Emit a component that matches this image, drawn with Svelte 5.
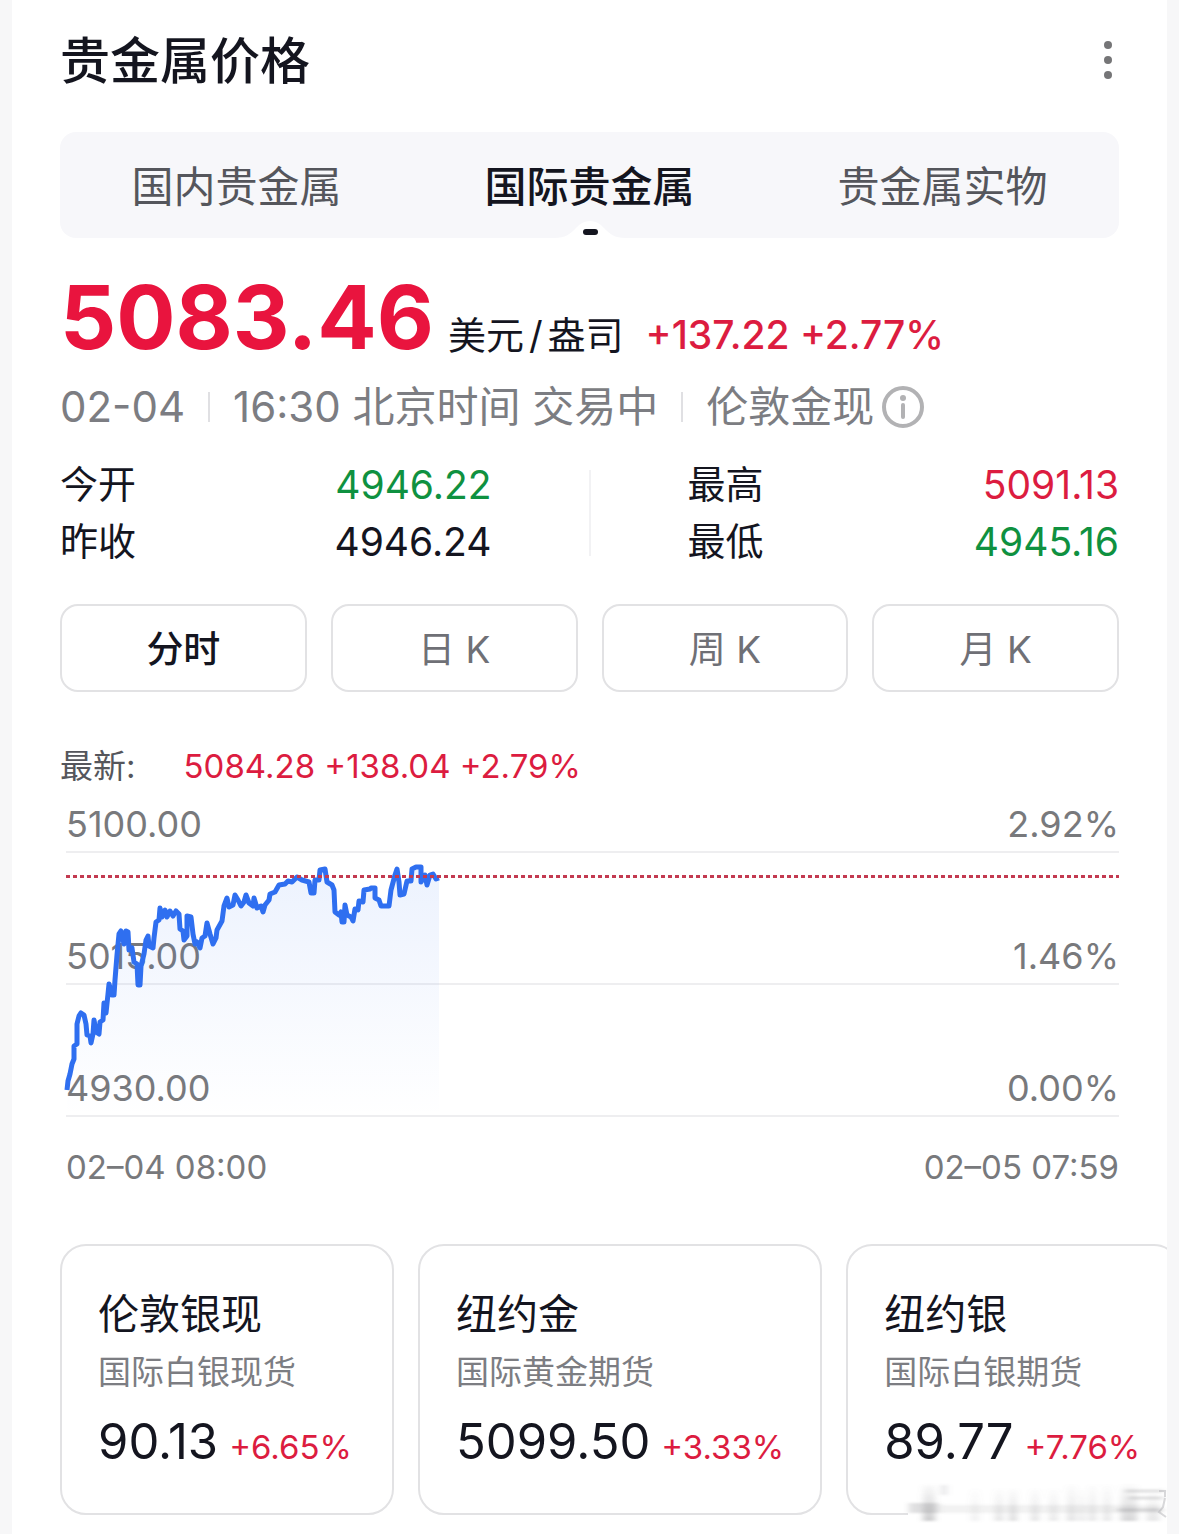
<script lang="ts">
  interface Quote {
    name: string;
    desc: string;
    price: string;
    pct: string;
  }

  const tabs = ['国内贵金属', '国际贵金属', '贵金属实物'];
  const periods = ['分时', '日 K', '周 K', '月 K'];

  const stats = [
    [
      { label: '今开', value: '4946.22', tone: 'down' },
      { label: '昨收', value: '4946.24', tone: '' },
    ],
    [
      { label: '最高', value: '5091.13', tone: 'up' },
      { label: '最低', value: '4945.16', tone: 'down' },
    ],
  ];

  const levels = [
    { price: '5100.00', pct: '2.92%' },
    { price: '5015.00', pct: '1.46%' },
    { price: '4930.00', pct: '0.00%' },
  ];

  const quotes: Quote[] = [
    { name: '伦敦银现', desc: '国际白银现货', price: '90.13', pct: '+6.65%' },
    { name: '纽约金', desc: '国际黄金期货', price: '5099.50', pct: '+3.33%' },
    { name: '纽约银', desc: '国际白银期货', price: '89.77', pct: '+7.76%' },
  ];

  // x, y in chart units: 1053 wide, 264 from top to bottom grid line
  const points: [number, number][] = [
    [1, 238], [2, 229], [4, 222], [6, 212], [8, 207], [8, 194], [11, 192], [11, 172],
    [13, 164], [15, 161], [18, 163], [20, 172], [21, 183], [24, 184], [25, 191], [27, 182],
    [28, 168], [30, 180], [33, 182], [34, 170], [37, 168], [38, 151], [40, 161], [42, 142],
    [43, 132], [46, 143], [48, 143], [49, 128], [51, 103], [53, 82], [55, 79], [58, 92],
    [60, 79], [62, 80], [63, 98], [66, 96], [68, 110], [71, 112], [72, 133], [74, 133],
    [75, 114], [78, 102], [80, 88], [82, 84], [83, 94], [87, 96], [88, 86], [90, 70],
    [93, 68], [94, 56], [96, 65], [99, 58], [101, 65], [104, 59], [107, 64], [110, 59],
    [113, 62], [114, 77], [117, 79], [118, 88], [121, 84], [121, 64], [125, 65], [127, 82],
    [129, 92], [131, 90], [134, 96], [136, 86], [139, 84], [141, 71], [144, 82], [147, 92],
    [150, 86], [151, 78], [156, 69], [158, 54], [161, 46], [163, 55], [167, 53], [169, 43],
    [172, 48], [175, 54], [178, 50], [180, 43], [183, 51], [187, 54], [188, 46], [191, 56],
    [195, 54], [197, 60], [199, 53], [203, 48], [204, 42], [209, 40], [213, 33], [219, 32],
    [222, 29], [226, 30], [231, 25], [236, 28], [243, 30], [245, 41], [248, 41], [249, 28],
    [253, 28], [254, 18], [259, 17], [261, 30], [266, 33], [268, 38], [269, 60], [273, 63],
    [275, 60], [276, 70], [278, 70], [279, 53], [281, 63], [285, 65], [287, 69], [289, 57],
    [292, 58], [293, 49], [297, 50], [298, 38], [304, 37], [305, 36], [309, 36], [309, 46],
    [313, 48], [315, 54], [323, 54], [325, 38], [329, 23], [331, 17], [333, 30], [334, 43],
    [338, 42], [341, 29], [345, 29], [346, 17], [350, 15], [355, 15], [355, 30], [359, 23],
    [361, 33], [364, 23], [367, 22], [370, 27], [373, 26],
  ];
  const line = 'M' + points.map((p) => p.join(' ')).join('L');
  const area = line + 'V264H1Z';

  // x, top, width and strength of the dark bands in the corner mark
  const bands = [
    [20, 4, 12, 0.4], [68, 8, 8, 0.12], [92, 8, 8, 0.22], [106, 8, 8, 0.28],
    [128, 8, 8, 0.22], [146, 8, 9, 0.18], [164, 4, 9, 0.22], [176, 8, 6, 0.18],
    [186, 4, 7, 0.22], [200, 4, 8, 0.2], [218, 4, 16, 0.32], [244, 12, 12, 0.2],
  ];

  let tab = $state(1);
  let period = $state(0);
</script>

<main class="panel">
  <header class="head">
    <h1>贵金属价格</h1>
    <button class="more" aria-label="更多">
      <svg viewBox="0 0 10 40" width="10" height="40" aria-hidden="true">
        <circle cx="5" cy="4" r="4" />
        <circle cx="5" cy="19" r="4" />
        <circle cx="5" cy="34" r="4" />
      </svg>
    </button>
  </header>

  <div class="tabs" role="tablist">
    {#each tabs as name, i}
      <button class="tab" class:active={tab === i} role="tab" aria-selected={tab === i} onclick={() => (tab = i)}>
        {name}
        {#if tab === i}
          <svg class="notch" viewBox="0 0 72 18" width="72" height="18" aria-hidden="true">
            <path d="M0 18C12 18 16 14 22 8Q28 1 36 1T50 8C56 14 60 18 72 18Z" fill="#fff" />
            <rect x="29" y="9" width="15" height="6" rx="3" fill="#14151f" />
          </svg>
        {/if}
      </button>
    {/each}
  </div>

  <section class="quote">
    <div class="price-row">
      <strong class="price">5083.46</strong>
      <span class="unit">美元<i>/</i>盎司</span>
      <span class="change">+137.22 +2.77%</span>
    </div>

    <div class="meta">
      <span>02-04</span>
      <i class="bar"></i>
      <span>16:30 北京时间 交易中</span>
      <i class="bar"></i>
      <span class="symbol">
        伦敦金现
        <button class="info" aria-label="说明">
          <svg viewBox="0 0 42 42" width="42" height="42" aria-hidden="true">
            <circle cx="21" cy="21" r="19" fill="none" stroke="#b2b2b4" stroke-width="4" />
            <circle cx="21" cy="12" r="3" fill="#b2b2b4" />
            <path d="M21 19v12" stroke="#b2b2b4" stroke-width="4" stroke-linecap="round" />
          </svg>
        </button>
      </span>
    </div>

    <div class="stats">
      {#each stats as col}
        <dl>
          {#each col as s}
            <div class="stat">
              <dt>{s.label}</dt>
              <dd class={s.tone}>{s.value}</dd>
            </div>
          {/each}
        </dl>
      {/each}
    </div>
  </section>

  <div class="periods">
    {#each periods as name, i}
      <button class="period" class:active={period === i} onclick={() => (period = i)}>{name}</button>
    {/each}
  </div>

  <section class="chart">
    <p class="latest"><span>最新:</span><span class="up">5084.28 +138.04 +2.79%</span></p>

    <div class="plot">
      {#each levels as l}
        <div class="level"><span>{l.price}</span><span>{l.pct}</span></div>
      {/each}
      <svg class="trend" viewBox="0 0 1053 264" preserveAspectRatio="none" aria-hidden="true">
        <defs>
          <linearGradient id="fade" x1="0" y1="0" x2="0" y2="1">
            <stop offset="0" stop-color="#2f6ff0" stop-opacity="0.09" />
            <stop offset="1" stop-color="#2f6ff0" stop-opacity="0" />
          </linearGradient>
        </defs>
        <path d={area} fill="url(#fade)" />
        <path class="line" d={line} />
        <path class="now" d="M0 24.5H1053" />
      </svg>
    </div>

    <div class="times"><span>02–04 08:00</span><span>02–05 07:59</span></div>
  </section>

  <div class="cards">
    {#each quotes as q}
      <a class="card" href="#{q.name}">
        <span class="name">{q.name}</span>
        <span class="desc">{q.desc}</span>
        <span class="last"><b>{q.price}</b><em>{q.pct}</em></span>
      </a>
    {/each}
  </div>

  <svg class="smudge" viewBox="0 0 264 44" width="264" height="44" aria-hidden="true">
    <defs>
      <filter id="soft" x="-10%" y="-30%" width="120%" height="160%">
        <feGaussianBlur stdDeviation="3 1" />
      </filter>
      <linearGradient id="band" x1="0" y1="0" x2="0" y2="1">
        <stop offset="0" stop-color="#808084" stop-opacity="0.1" />
        <stop offset="1" stop-color="#808084" />
      </linearGradient>
    </defs>
    <rect x="5" y="6" width="259" height="34" fill="#fff" />
    <g filter="url(#soft)">
      <rect x="6" y="22" width="30" height="10" fill="#808084" opacity="0.25" />
      <rect x="38" y="4" width="6" height="10" fill="#808084" opacity="0.18" />
      <rect x="36" y="24" width="222" height="8" fill="#808084" opacity="0.1" />
      <path d="M222 10h38M226 17h34M214 29h46" stroke="#808084" stroke-width="3" opacity="0.25" />
      {#each bands as [x, y, width, opacity]}
        <rect {x} {y} {width} height={40 - y} {opacity} fill="url(#band)" />
      {/each}
    </g>
    <path
      d="M256 10h6v6M262 17l-2 9l-4 5l7 5"
      fill="none"
      stroke="#b4b4b8"
      stroke-width="2"
      opacity="0.5"
    />
  </svg>
</main>

<style>
  :global(body) {
    margin: 0;
    background: #f7f7f8;
  }

  .panel {
    position: relative;
    box-sizing: border-box;
    min-height: 100vh;
    margin: 0 12px;
    padding: 26px 48px 20px;
    overflow: hidden;
    background: #fff;
    color: #14151f;
    font-family: Inter, 'Noto Sans CJK SC', sans-serif;
  }

  button {
    margin: 0;
    padding: 0;
    border: 0;
    background: none;
    color: inherit;
    font: inherit;
    cursor: pointer;
  }

  i,
  em {
    font-style: normal;
  }

  .up {
    color: #dc1c40;
  }

  .down {
    color: #0f9140;
  }

  /* header */
  .head {
    display: flex;
    align-items: center;
    justify-content: space-between;
    height: 70px;
  }

  h1 {
    margin: 0;
    font-size: 50px;
    font-weight: 500;
    line-height: 70px;
  }

  .more {
    display: flex;
    padding: 0 6px;
    fill: #757577;
  }

  /* tabs */
  .tabs {
    display: grid;
    grid-template-columns: repeat(3, 1fr);
    margin-top: 36px;
    border-radius: 16px;
    background: #f7f7fa;
  }

  .tab {
    position: relative;
    height: 106px;
    padding-top: 4px;
    color: #55565c;
    font-size: 42px;
    line-height: 60px;
  }

  .tab.active {
    color: #14151f;
    font-weight: 500;
  }

  .notch {
    position: absolute;
    bottom: 0;
    left: calc(50% - 36px);
  }

  /* quote */
  .price-row {
    display: flex;
    align-items: baseline;
    height: 104px;
    margin-top: 27px;
    white-space: nowrap;
  }

  .price {
    color: #e9143e;
    font-size: 88px;
    font-weight: 700;
    line-height: 104px;
  }

  .unit {
    margin-left: 14px;
    font-size: 38px;
  }

  .unit i {
    margin: 0 5px;
  }

  .change {
    margin-left: 22px;
    color: #dc1c40;
    font-size: 39px;
    font-weight: 500;
  }

  .meta {
    display: flex;
    align-items: center;
    height: 60px;
    margin-top: 8px;
    color: #7c7d82;
    font-size: 42px;
    line-height: 60px;
    white-space: nowrap;
  }

  .bar {
    width: 2px;
    height: 30px;
    margin: 0 23px;
    background: #e0e0e3;
  }

  .symbol {
    display: flex;
    align-items: center;
    gap: 8px;
  }

  .info {
    display: flex;
  }

  .stats {
    display: grid;
    grid-template-columns: 1fr 1fr;
    margin-top: 19px;
    background: linear-gradient(#f2f2f4, #f2f2f4) center / 2px 86px no-repeat;
  }

  dl {
    margin: 0;
  }

  dl:first-child {
    padding-right: 98px;
  }

  dl:last-child {
    padding-left: 98px;
  }

  .stat {
    display: flex;
    align-items: center;
    justify-content: space-between;
    height: 57px;
    font-size: 38px;
    line-height: 57px;
  }

  dd {
    margin: 0;
    font-size: 39px;
  }

  /* periods */
  .periods {
    display: grid;
    grid-template-columns: repeat(4, 1fr);
    gap: 24px;
    margin-top: 34px;
  }

  .period {
    height: 88px;
    padding-bottom: 2px;
    border: 2px solid #e2e2e4;
    border-radius: 18px;
    color: #6f7076;
    font-size: 37px;
  }

  .period.active {
    color: #14151f;
    font-weight: 500;
  }

  /* chart */
  .latest {
    display: flex;
    gap: 48px;
    margin: 50px 0 0;
    color: #55565c;
    font-size: 33px;
    line-height: 48px;
  }

  .latest .up {
    color: #dc1c40;
  }

  .plot {
    position: relative;
    margin: 7px 0 0 6px;
  }

  .level {
    display: flex;
    align-items: flex-end;
    justify-content: space-between;
    box-sizing: border-box;
    height: 132px;
    padding-bottom: 5px;
    border-bottom: 2px solid #eeeef0;
    color: #78797c;
    font-size: 36px;
    line-height: 44px;
  }

  .level:first-child {
    height: 56px;
  }

  .trend {
    position: absolute;
    top: 55px;
    left: 0;
    width: 100%;
    height: 264px;
    overflow: visible;
  }

  .line {
    fill: none;
    stroke: #2f6ff0;
    stroke-width: 5;
    stroke-linejoin: round;
    vector-effect: non-scaling-stroke;
  }

  .now {
    stroke: #c33a50;
    stroke-width: 3;
    stroke-dasharray: 4 3;
  }

  .times {
    display: flex;
    justify-content: space-between;
    margin: 26px 0 0 6px;
    color: #78797c;
    font-size: 33px;
    line-height: 48px;
  }

  /* cards */
  .cards {
    display: flex;
    gap: 24px;
    margin: 53px -48px 0 0;
    overflow: hidden;
  }

  .card {
    display: flex;
    flex: none;
    flex-direction: column;
    box-sizing: border-box;
    min-width: 334px;
    padding: 38px 36px 30px;
    border: 2px solid #e2e2e4;
    border-radius: 26px;
    color: inherit;
    text-decoration: none;
  }

  .name {
    font-size: 41px;
    line-height: 60px;
  }

  .desc {
    color: #7c7d82;
    font-size: 33px;
    line-height: 56px;
  }

  .last {
    display: flex;
    align-items: baseline;
    gap: 11px;
    margin-top: 6px;
    line-height: 72px;
  }

  .last b {
    font-size: 49px;
    font-weight: 400;
  }

  .last em {
    color: #dc1c40;
    font-size: 33px;
  }

  .smudge {
    position: absolute;
    right: 0;
    bottom: 10px;
  }
</style>
